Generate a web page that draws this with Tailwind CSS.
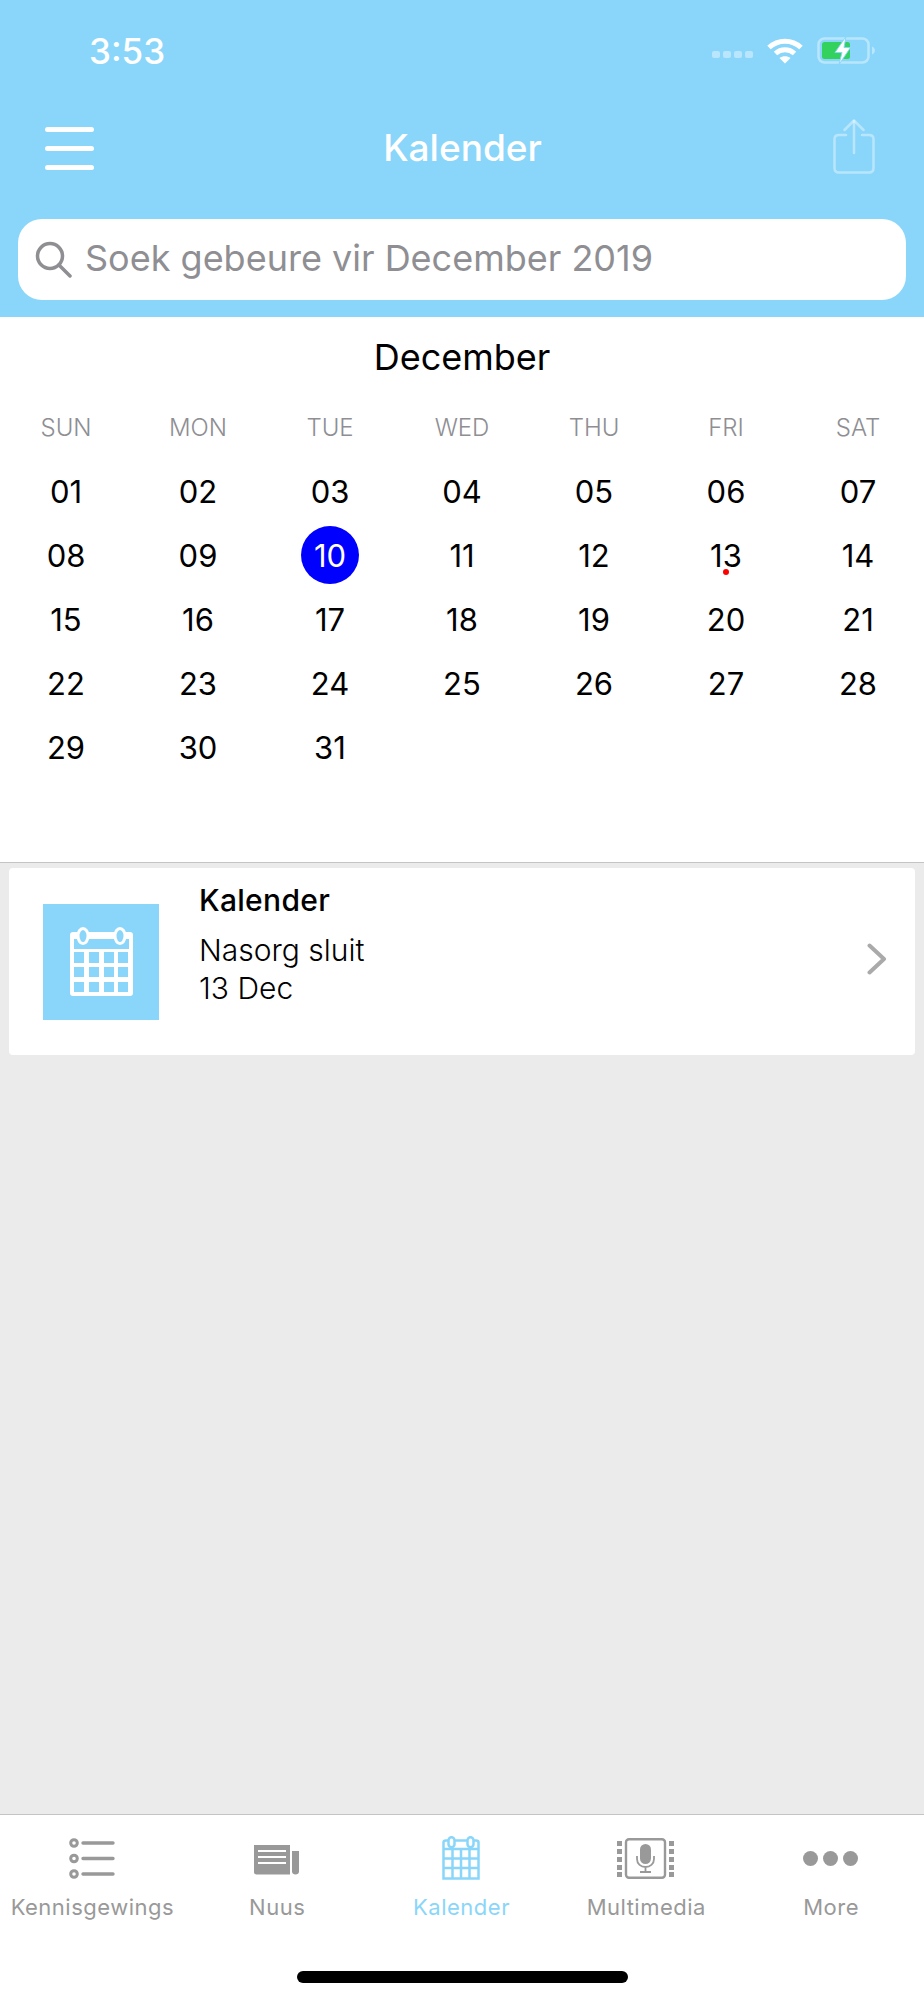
<!DOCTYPE html>
<html>
<head>
<meta charset="utf-8">
<script src="https://cdn.jsdelivr.net/npm/@tailwindcss/browser@4"></script>
</head>
<body class="m-0">
<div class="w-[924px] h-[2000px] flex flex-col bg-[#ebebeb] font-['Inter','Liberation_Sans',sans-serif] overflow-hidden">
  <header class="h-[317px] bg-[#8ad6fa] flex flex-col shrink-0">
    <div class="h-[100px] flex items-center justify-between pl-[89px] pr-[48px]">
      <span class="text-white text-[35px] font-medium leading-none mt-[2px]">3:53</span>
      <div class="flex items-center">
        <div class="flex gap-[3px] mr-[14px] mt-[8px]">
          <span class="w-[8px] h-[7px] rounded-[2px] bg-white/40"></span>
          <span class="w-[8px] h-[7px] rounded-[2px] bg-white/40"></span>
          <span class="w-[8px] h-[7px] rounded-[2px] bg-white/40"></span>
          <span class="w-[8px] h-[7px] rounded-[2px] bg-white/40"></span>
        </div>
        <svg width="36" height="27" viewBox="0 0 36 27" class="mr-[14px]" fill="none" stroke="white" stroke-width="5">
          <path d="M2 10.5C11 2 25 2 34 10.5"/>
          <path d="M8.500 16.500C14 11.500 22 11.500 27.500 16.500"/>
          <path d="M12.500 21L18 26.500L23.500 21C20.500 18.500 15.500 18.500 12.500 21Z" fill="white" stroke="none"/>
        </svg>
        <svg width="59" height="27" viewBox="0 0 59 27">
          <rect x="1.500" y="1.500" width="50" height="24" rx="6" fill="none" stroke="white" stroke-opacity="0.4" stroke-width="2.500"/>
          <rect x="5" y="5" width="28" height="17" rx="2.500" fill="#32d25c"/>
          <path d="M55 9.500C57 10.500 58 12 58 13.500C58 15 57 16.500 55 17.500Z" fill="white" fill-opacity="0.4"/>
          <path d="M29 -0.500L18 15.500H25L22 27.500L33.500 10.500H27Z" fill="white" stroke="#8ad6fa" stroke-width="1"/>
        </svg>
      </div>
    </div>
    <div class="h-[96px] flex items-center justify-between pl-[45px] pr-[49px] shrink-0">
      <div class="flex flex-col gap-[14px] w-[49px]">
        <span class="block h-[5px] rounded-full bg-white"></span>
        <span class="block h-[5px] rounded-full bg-white"></span>
        <span class="block h-[5px] rounded-full bg-white"></span>
      </div>
      <span class="text-white text-[37px] font-medium leading-none mt-[-2px] ml-[-2px]">Kalender</span>
      <svg width="42" height="56" viewBox="0 0 42 56" class="mt-[-3px]" fill="none" stroke="white" stroke-opacity="0.4" stroke-width="2.500" stroke-linecap="round" stroke-linejoin="round">
        <path d="M13 16H6C3 16 1.500 17.500 1.500 20V49C1.500 52 3 53.500 6 53.500H36C39 53.500 40.500 52 40.500 49V20C40.500 17.500 39 16 36 16H29"/>
        <path d="M21 34V2"/>
        <path d="M11.500 11L21 1.500L30.500 11"/>
      </svg>
    </div>
    <div class="mx-[18px] mt-[23px] h-[81px] bg-white rounded-[24px] flex items-center pl-[17px] gap-[13px] shrink-0">
      <svg width="37" height="37" viewBox="0 0 37 37" fill="none" stroke="#8e8e93" stroke-width="3.500" stroke-linecap="round">
        <circle cx="15" cy="15" r="12.500"/>
        <path d="M24 24L35 35"/>
      </svg>
      <span class="text-[#8e8e93] text-[36px] leading-none mt-[-3px]">Soek gebeure vir December 2019</span>
    </div>
  </header>

  <section class="h-[546px] bg-white border-b border-[#c4c4c4] shrink-0 flex flex-col">
    <div class="h-[80px] flex items-center justify-center text-[36px] text-black leading-none">December</div>
    <div class="grid grid-cols-7 h-[60px] items-center text-center text-[24px] font-light text-[#8e8e93] leading-none pt-[2px]">
      <span>SUN</span><span>MON</span><span>TUE</span><span>WED</span><span>THU</span><span>FRI</span><span>SAT</span>
    </div>
    <div class="grid grid-cols-7 auto-rows-[64px] items-center justify-items-center text-[31px] text-black leading-none mt-[2px]">
      <span>01</span><span>02</span><span>03</span><span>04</span><span>05</span><span>06</span><span>07</span>
      <span>08</span><span>09</span>
      <span class="w-[58px] h-[58px] rounded-full bg-[#0000ff] text-white flex items-center justify-center">10</span>
      <span>11</span><span>12</span>
      <span class="relative">13<span class="absolute left-1/2 -translate-x-1/2 top-[29px] w-[6px] h-[6px] rounded-full bg-[#ff0000]"></span></span>
      <span>14</span>
      <span>15</span><span>16</span><span>17</span><span>18</span><span>19</span><span>20</span><span>21</span>
      <span>22</span><span>23</span><span>24</span><span>25</span><span>26</span><span>27</span><span>28</span>
      <span>29</span><span>30</span><span>31</span>
    </div>
  </section>

  <main class="flex-1 px-[9px] pt-[5px]">
    <div class="h-[187px] bg-white rounded-[4px] flex items-center pl-[34px] pr-[28px]">
      <div class="w-[116px] h-[116px] bg-[#8ad6fa] flex items-center justify-center shrink-0">
        <svg width="63" height="69" viewBox="0 0 63 69">
          <rect x="0" y="5" width="63" height="64" rx="3" fill="white"/>
          <rect x="4" y="12" width="55" height="10" fill="#8ad6fa"/>
          <g fill="#8ad6fa">
            <rect x="4" y="25" width="10" height="11"/><rect x="19" y="25" width="10" height="11"/><rect x="34" y="25" width="10" height="11"/><rect x="48" y="25" width="10" height="11"/>
            <rect x="4" y="40" width="10" height="10"/><rect x="19" y="40" width="10" height="10"/><rect x="34" y="40" width="10" height="10"/><rect x="48" y="40" width="10" height="10"/>
            <rect x="4" y="55" width="10" height="10"/><rect x="19" y="55" width="10" height="10"/><rect x="34" y="55" width="10" height="10"/><rect x="48" y="55" width="10" height="10"/>
          </g>
          <ellipse cx="13" cy="9" rx="5" ry="7.500" fill="#8ad6fa" stroke="white" stroke-width="3"/>
          <ellipse cx="50" cy="9" rx="5" ry="7.500" fill="#8ad6fa" stroke="white" stroke-width="3"/>
        </svg>
      </div>
      <div class="ml-[40px] flex-1 flex flex-col text-black self-start pt-[13px]">
        <span class="text-[30px] font-medium leading-[38px] tracking-[0.3px]">Kalender</span>
        <span class="text-[30px] font-light leading-[38px] mt-[12px]">Nasorg sluit</span>
        <span class="text-[30px] font-light leading-[38px]">13 Dec</span>
      </div>
      <svg width="20" height="32" viewBox="0 0 20 32" class="mt-[-6px]" fill="none" stroke="#aaaaaa" stroke-width="4" stroke-linecap="round" stroke-linejoin="round">
        <path d="M2.500 2.500L17 16L2.500 29.500"/>
      </svg>
    </div>
  </main>

  <nav class="h-[186px] bg-white border-t border-[#c4c4c4] shrink-0 flex flex-col">
    <div class="grid grid-cols-5 h-[156px] pt-[20px]">
      <div class="flex flex-col items-center">
        <div class="h-[46px] flex items-center justify-center">
          <svg width="46" height="41" viewBox="0 0 46 41" fill="none" stroke="#999999">
            <circle cx="5" cy="5" r="3.300" stroke-width="3"/><circle cx="5" cy="20.500" r="3.300" stroke-width="3"/><circle cx="5" cy="36" r="3.300" stroke-width="3"/>
            <path d="M14 5H44M14 20.500H44M14 36H44" stroke-width="3.400" stroke-linecap="round"/>
          </svg>
        </div>
        <span class="text-[22px] text-[#999999] leading-none mt-[15px] tracking-[0.5px]">Kennisgewings</span>
      </div>
      <div class="flex flex-col items-center">
        <div class="h-[46px] flex items-center justify-center">
          <svg width="46" height="30" viewBox="0 0 46 30" class="mt-[4px]">
            <path d="M0 0H36V29.500H2.500C1 29.500 0 28.500 0 27Z" fill="#999999"/>
            <path d="M4 6H32M4 12H32M4 18H32" stroke="white" stroke-width="2"/>
            <path d="M38 6H45V26.500C45 28.500 43.500 29.500 41.500 29.500C39.500 29.500 38 28.500 38 26.500Z" fill="#999999"/>
          </svg>
        </div>
        <span class="text-[22px] text-[#999999] leading-none mt-[15px] tracking-[0.5px]">Nuus</span>
      </div>
      <div class="flex flex-col items-center">
        <div class="h-[46px] flex items-center justify-center ml-[-2px]">
          <svg width="38" height="44" viewBox="0 0 38 44" fill="none" stroke="#8ad6fa" stroke-width="2.500">
            <path d="M1.500 42.500V6.500C1.500 5 2.500 4.500 4 4.500H34C35.500 4.500 36.500 5 36.500 6.500V42.500Z" fill="white"/>
            <path d="M1.500 13H36.500M1.500 22.500H36.500M1.500 32H36.500M10.500 13V42.500M19 13V42.500M27.500 13V42.500"/>
            <rect x="6.500" y="1.200" width="6" height="10" rx="3" fill="white"/>
            <rect x="25.500" y="1.200" width="6" height="10" rx="3" fill="white"/>
          </svg>
        </div>
        <span class="text-[22px] text-[#8ad6fa] leading-none mt-[15px] tracking-[0.5px] ml-[-1px]">Kalender</span>
      </div>
      <div class="flex flex-col items-center">
        <div class="h-[46px] flex items-center justify-center ml-[-2px]">
          <svg width="57" height="41" viewBox="0 0 57 41">
            <rect x="9" y="1.200" width="39" height="38.600" rx="3" fill="none" stroke="#999999" stroke-width="2.400"/>
            <g fill="#999999">
              <rect x="0" y="3" width="5" height="5"/><rect x="0" y="11" width="5" height="5"/><rect x="0" y="19" width="5" height="5"/><rect x="0" y="27" width="5" height="5"/><rect x="0" y="34" width="5" height="5"/>
              <rect x="52" y="3" width="5" height="5"/><rect x="52" y="11" width="5" height="5"/><rect x="52" y="19" width="5" height="5"/><rect x="52" y="27" width="5" height="5"/><rect x="52" y="34" width="5" height="5"/>
              <rect x="23" y="6" width="11" height="20" rx="5.500"/>
            </g>
            <path d="M20 18V21C20 26 24 29 28.500 29C33 29 37 26 37 21V18M28.500 29V34M23 34H34" fill="none" stroke="#999999" stroke-width="1.800"/>
          </svg>
        </div>
        <span class="text-[22px] text-[#999999] leading-none mt-[15px] tracking-[0.5px] ml-[-1px]">Multimedia</span>
      </div>
      <div class="flex flex-col items-center">
        <div class="h-[46px] flex items-center justify-center gap-[5px] ml-[-2px]">
          <span class="w-[15px] h-[15px] rounded-full bg-[#999999]"></span>
          <span class="w-[15px] h-[15px] rounded-full bg-[#999999]"></span>
          <span class="w-[15px] h-[15px] rounded-full bg-[#999999]"></span>
        </div>
        <span class="text-[22px] text-[#999999] leading-none mt-[15px] tracking-[0.5px] ml-[-1px]">More</span>
      </div>
    </div>
    <div class="flex justify-center">
      <span class="block w-[331px] h-[12px] rounded-full bg-black"></span>
    </div>
  </nav>
</div>
</body>
</html>
